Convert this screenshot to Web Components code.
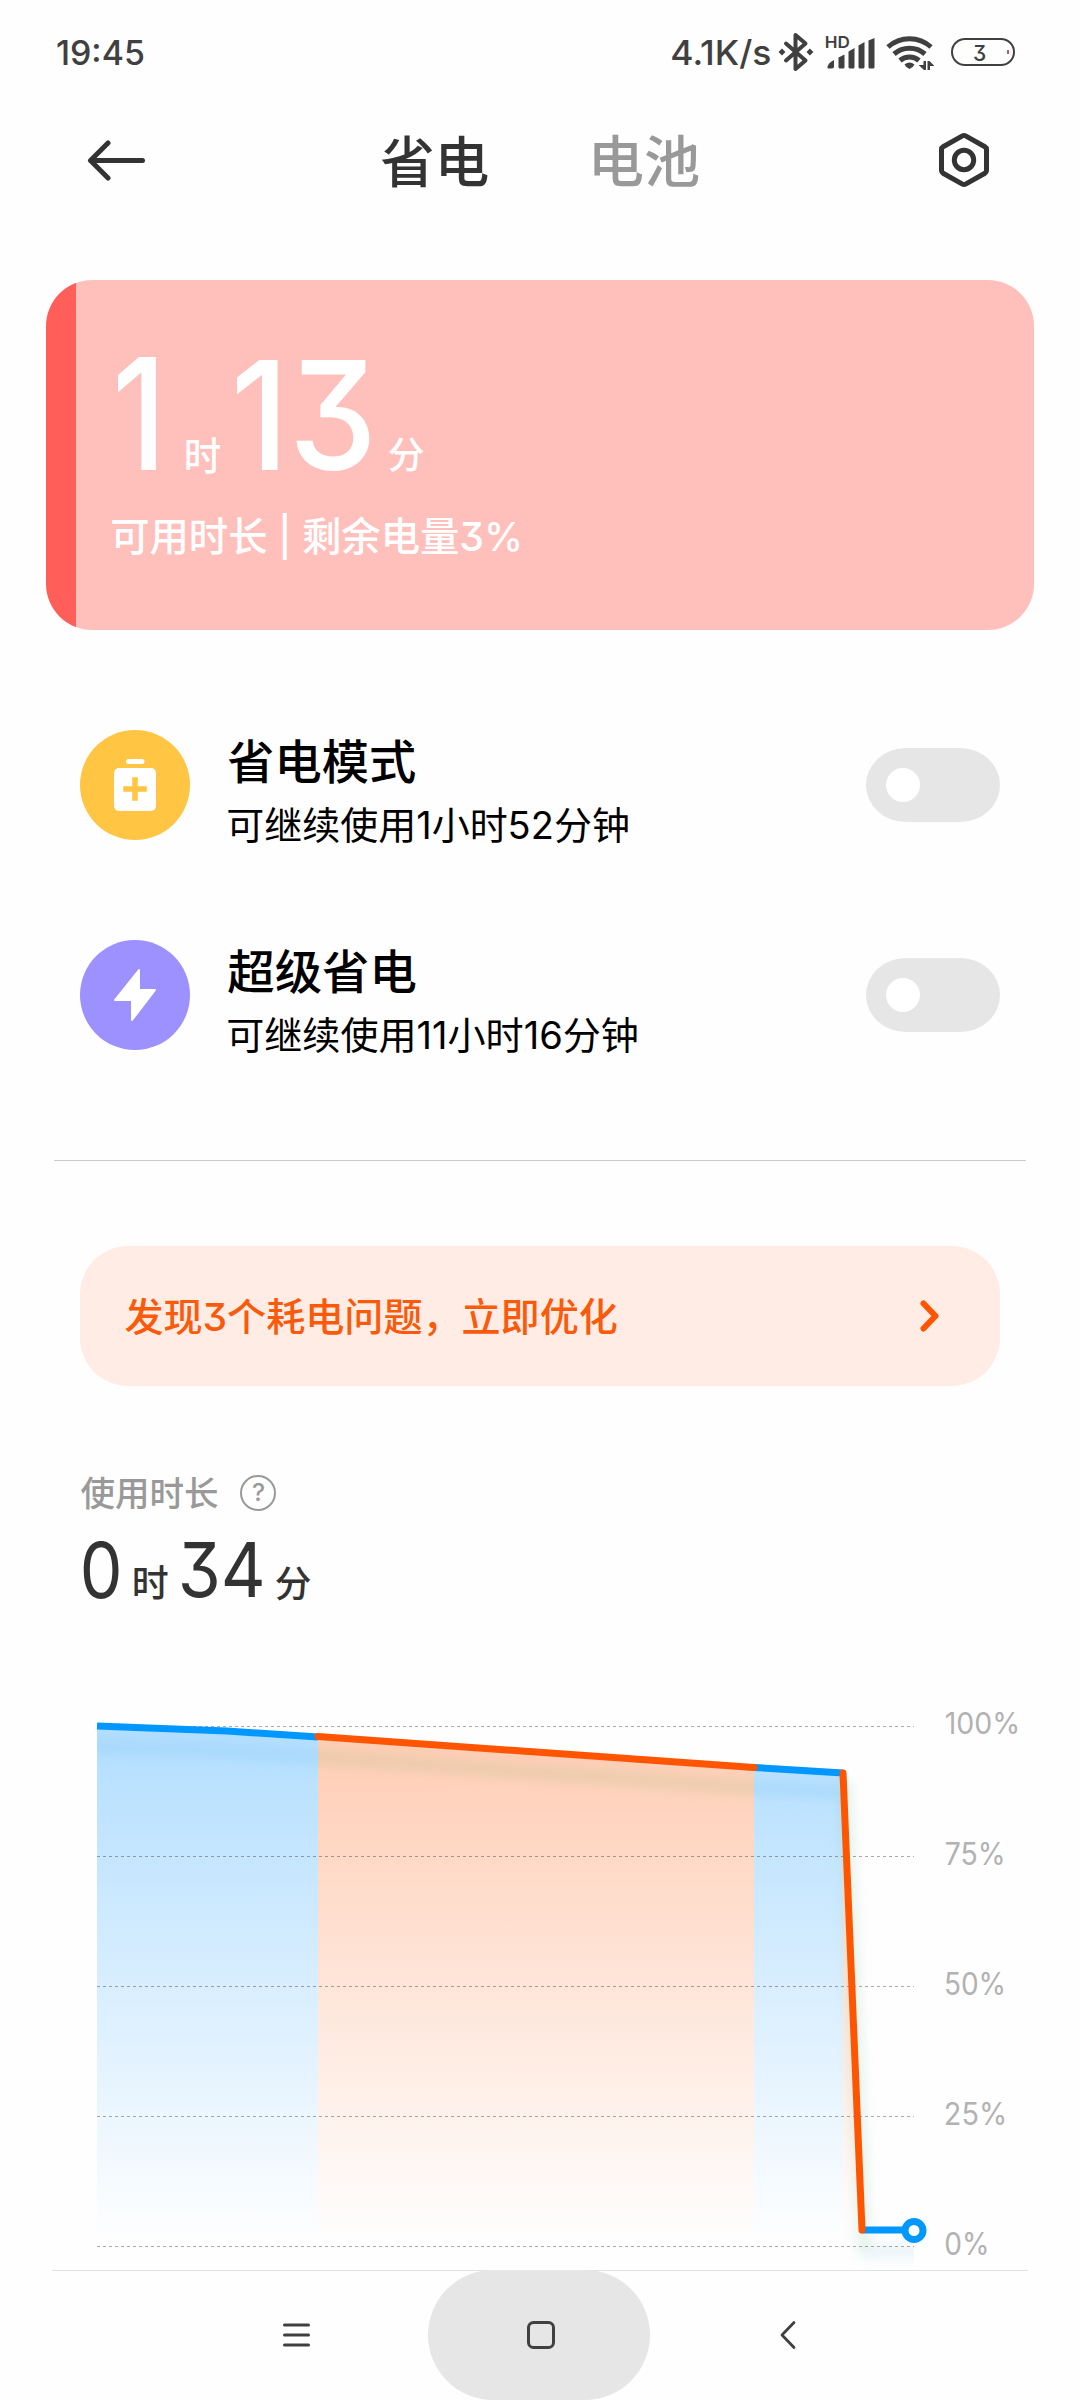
<!DOCTYPE html>
<html lang="zh-CN">
<head>
<meta charset="utf-8">
<title>省电</title>
<style>
html,body{margin:0;padding:0;background:#fefefe}
body{width:1080px;height:2400px;overflow:hidden;font-family:Inter,"Noto Sans CJK SC",sans-serif;color:#333}
</style>
</head>
<body>
<power-app></power-app>
<script>
const FAMILY = 'Inter,"Noto Sans CJK SC",sans-serif';
const pen = document.createElement('canvas').getContext('2d');

function define(name, html, setup) {
  const tpl = document.createElement('template');
  tpl.innerHTML = html;
  customElements.define(name, class extends HTMLElement {
    connectedCallback() {
      if (this.shadowRoot) return;
      this.attachShadow({mode: 'open'}).append(tpl.content.cloneNode(true));
      if (setup) setup.call(this, this.shadowRoot);
    }
  });
}

/* A text whose box is its ink: size = font size, w = ink width, h = ink height.
   level = the characters whose ink sets the height, when others overshoot it. */
define('ink-text', `<style>
  :host{display:block;flex:none;white-space:pre}
  span{display:block;width:max-content;transform-origin:0 0}
</style><span></span>`, function (root) {
  const span = root.querySelector('span');
  const text = this.getAttribute('text');
  const size = +this.getAttribute('size');
  const weight = this.getAttribute('weight') || 400;
  const w = +this.getAttribute('w');
  const h = +this.getAttribute('h');
  const zoom = 8;
  pen.font = `${weight} ${size * zoom}px ${FAMILY}`;
  const m = pen.measureText(text);
  const v = pen.measureText(this.getAttribute('level') || text);
  const left = m.actualBoundingBoxLeft / zoom;
  const ink = left + m.actualBoundingBoxRight / zoom;
  const ascent = v.actualBoundingBoxAscent / zoom;
  const inkH = ascent + v.actualBoundingBoxDescent / zoom;
  const kx = w / ink, ky = h / inkH;
  const base = size / 2 + (m.fontBoundingBoxAscent - m.fontBoundingBoxDescent) / zoom / 2;
  span.textContent = text;
  span.style.cssText = `font:${weight} ${size}px/${size}px ${FAMILY};font-feature-settings:"cv09";transform:translate(${left * kx}px,${(ascent - base) * ky}px) scale(${kx},${ky})`;
  this.style.width = w + 'px';
  this.style.height = h + 'px';
});

define('status-bar', `<style>
  :host{display:flex;height:104px;box-sizing:border-box;padding:32px 64px 0 57px;color:#404040;align-items:flex-start}
  .time{margin-top:8px}.rate{margin:8px 0 0 528.500px}
  svg{display:block;flex:none}
  .hd{display:flex;flex-direction:column;margin:4px 0 0 12px;width:50px}
  .bars{margin-top:-10px}
  .bat{display:flex;box-sizing:border-box;width:64px;height:28px;border:2px solid #404040;border-radius:14px;margin:6px 0 0 17px;padding:4.500px 4px 0 21px;justify-content:space-between}
  i{width:2px;height:4px;background:#d9534f;margin-top:5px}
</style>
<ink-text class="time" text="19:45" size="34" weight="500" w="86.5" h="25.5"></ink-text>
<ink-text class="rate" text="4.1K/s" level="4" size="34" weight="500" w="98" h="25"></ink-text>
<svg style="margin-left:7.500px" width="36" height="40" viewBox="0 0 36 40"><path d="M8 11.500L27.500 28.500L17.500 37V3L27.500 11.500L8 28.500" fill="none" stroke="#404040" stroke-width="4" stroke-linejoin="round" stroke-linecap="round"/><path d="M0.500 20l3.500-3.400 3.400 3.400-3.400 3.400zM28.500 20l3.400-3.400 3.500 3.400-3.500 3.400z" fill="#404040"/></svg>
<div class="hd"><ink-text text="HD" size="16" weight="600" w="23" h="12"></ink-text>
<svg class="bars" width="50" height="31" viewBox="0 0 50 31"><g fill="#404040"><path d="M1.500 30q0-5 6.500-8v6.500q0 2-2 2H2z"/><path d="M12.500 19.500l6-3v12.500q0 1.500-1.500 1.500h-3q-1.500 0-1.500-1.500z"/><path d="M22.500 13.500l6-3.500v19q0 1.500-1.500 1.500h-3q-1.500 0-1.500-1.500z"/><path d="M32.500 7.500l6-3.500v25q0 1.500-1.500 1.500h-3q-1.500 0-1.500-1.500z"/><path d="M42.500 2.500l6-2.500v29q0 1.500-1.500 1.500h-3q-1.500 0-1.500-1.500z"/></g></svg></div>
<svg style="margin:3px 0 0 10px" width="48" height="38" viewBox="0 0 48 38"><g fill="none" stroke="#404040" stroke-width="5"><path d="M2 12a32 32 0 0 1 43 0"/><path d="M8 19a23.500 23.500 0 0 1 31 0"/><path d="M14 25.500a14.500 14.500 0 0 1 19 0"/></g><path d="M18.500 29.500q5-4 10 0q-1 2.500-5 4.500q-4-2-5-4.500z" fill="#404040"/><path d="M37.500 26h2.500v9h-2l-5.500-5h5zM41.500 26h2l5 5h-4.500v4h-2.500z" fill="#404040"/></svg>
<div class="bat"><ink-text text="3" size="22" weight="500" w="11" h="16"></ink-text><i></i></div>`);

define('title-bar', `<style>
  :host{display:flex;height:176px;box-sizing:border-box;padding:28px 91px 0 88px;align-items:flex-start}
  svg{display:block;flex:none}
  .b{margin-left:106px;color:#999}
</style>
<svg style="margin:8px 0 0 -1px" width="58" height="41" viewBox="0 0 58 41"><path d="M55.500 20.500H4M21 3L3.500 20.500L21 38" fill="none" stroke="#333" stroke-width="5" stroke-linecap="round" stroke-linejoin="round"/></svg>
<ink-text style="margin:4px 0 0 236px" text="省电" size="54" weight="500" w="106.500" h="51.500"></ink-text>
<ink-text class="b" style="margin-top:4px" text="电池" size="54" weight="500" w="104.500" h="51"></ink-text>
<svg style="margin:0 0 0 auto" width="50" height="56" viewBox="0 0 50 56"><path d="M23.400 3.900Q25 3 26.600 3.900L45.900 14.800Q47.500 15.700 47.500 17.500V38.500Q47.500 40.300 45.900 41.200L26.600 52.100Q25 53 23.400 52.100L4.100 41.200Q2.500 40.300 2.500 38.500V17.500Q2.500 15.700 4.100 14.800Z" fill="none" stroke="#333" stroke-width="5"/><circle cx="25" cy="28" r="9.700" fill="none" stroke="#333" stroke-width="5"/></svg>`);

define('hero-card', `<style>
  :host{display:flex;flex-direction:column;height:350px;margin:0 46px;border-radius:46px;box-sizing:border-box;padding:77.500px 0 0 66px;color:#fff;background:linear-gradient(90deg,#ff5f58 0 30px,#ffc0bb 30px)}
  .t{display:flex;align-items:flex-start;height:159.500px;padding-left:5px}
</style>
<div class="t">
<ink-text style="margin:-1.500px 0 0 -1px" text="1" size="154" weight="450" w="41" h="114"></ink-text>
<ink-text style="margin:80px 0 0 28.500px" text="时" size="36" weight="500" w="34" h="35.500"></ink-text>
<ink-text style="margin:-1.500px 0 0 15px" text="13" size="154" weight="450" w="135" h="116"></ink-text>
<ink-text style="margin:80px 0 0 19.500px" text="分" size="36" weight="500" w="34.500" h="35"></ink-text>
</div>
<ink-text text="可用时长 | 剩余电量3%" level="可用时长剩余电量" size="38" weight="500" w="407" h="37.500"></ink-text>`);

define('mi-switch', `<style>
  :host{display:flex;align-items:center;flex:none;box-sizing:border-box;width:134px;height:74px;padding-left:20px;border-radius:40px/37px;background:#e6e6e6}
  i{width:34px;height:34px;border-radius:50%;background:#fff}
</style><i></i>`);

define('mode-row', `<style>
  :host{display:flex;height:110px;padding:0 80px;align-items:center}
  .ic{display:flex;align-items:center;justify-content:center;width:110px;height:110px;border-radius:50%;background:var(--disc);flex:none}
  .tx{display:flex;flex-direction:column;gap:24px;margin:11px auto 0 38px;color:#000}
</style>
<div class="ic"><slot></slot></div><div class="tx"></div><mi-switch></mi-switch>`, function (root) {
  root.querySelector('.tx').innerHTML =
    `<ink-text text="${this.getAttribute('name')}" size="47" weight="500" w="187.500" h="44"></ink-text>` +
    `<ink-text text="${this.getAttribute('note')}" size="37" w="${this.getAttribute('note-w')}" h="35.500"></ink-text>`;
});

define('tip-banner', `<style>
  :host{display:flex;align-items:center;justify-content:space-between;height:140px;margin:0 80px;box-sizing:border-box;padding:2px 60px 0 44.500px;border-radius:48px;background:#ffede5;color:#fa5a0a}
  svg{margin-top:-2px}
</style>
<ink-text text="发现3个耗电问题，立即优化" size="38" weight="500" w="491.500" h="37.500"></ink-text>
<svg width="21" height="32" viewBox="0 0 21 32"><path d="M4.500 3.500L16.500 16L4.500 28.500" fill="none" stroke="#ff5500" stroke-width="6" stroke-linecap="round" stroke-linejoin="round"/></svg>`);

define('usage-head', `<style>
  :host{display:flex;flex-direction:column;height:230px;padding-left:82px}
  .l{display:flex;color:#999;height:66px;gap:22px;margin-left:-1px}
  .q{display:flex;justify-content:center;box-sizing:border-box;width:36px;height:36px;border:2.500px solid #999;border-radius:50%;padding-top:6.500px}
  .v{display:flex;align-items:flex-start}
</style>
<div class="l"><ink-text style="margin-top:2px" text="使用时长" size="34" weight="500" w="137" h="33"></ink-text><div class="q"><ink-text text="?" size="24" weight="500" w="11" h="18"></ink-text></div></div>
<div class="v">
<ink-text style="margin-left:1px" text="0" size="78" weight="400" w="36" h="58.500"></ink-text>
<ink-text style="margin:25px 0 0 15px" text="时" size="35" weight="500" w="33.500" h="34.500"></ink-text>
<ink-text style="margin:0 0 0 13.500px" text="34" size="78" weight="400" w="81" h="58"></ink-text>
<ink-text style="margin:25px 0 0 14px" text="分" size="35" weight="500" w="34.500" h="34.500"></ink-text>
</div>`);

define('battery-chart', `<style>
  :host{display:flex;height:565px;color:#b2b2b2}
  svg{display:block;flex:none;margin-left:97px}
  .y{display:flex;flex-direction:column;gap:107px;padding-top:8px;margin-left:19px}
</style>
<svg width="830" height="565" viewBox="97 1705 830 565">
<defs>
<linearGradient id="b" gradientUnits="userSpaceOnUse" x1="0" y1="1726" x2="0" y2="2240"><stop offset="0" stop-color="#b2deff"/><stop offset="1" stop-color="#fefefe"/></linearGradient>
<linearGradient id="o" gradientUnits="userSpaceOnUse" x1="0" y1="1726" x2="0" y2="2240"><stop offset="0" stop-color="#ffccb3"/><stop offset="1" stop-color="#fefefe"/></linearGradient>
<filter id="s" filterUnits="userSpaceOnUse" x="60" y="1680" width="900" height="620"><feGaussianBlur stdDeviation="6"/></filter>
<clipPath id="c"><path d="M97 1705H914V2270H97Z"/></clipPath>
<clipPath id="c1"><path d="M97 1705H318V2270H97ZM754 1705H914V2270H754Z"/></clipPath>
<clipPath id="c2"><path d="M318 1705H754V2270H318Z"/></clipPath>
</defs>
<path d="M97 1726L227 1731L318 1737V2246H97Z" fill="url(#b)"/>
<path d="M318 1737L754 1768V2246H318Z" fill="url(#o)"/>
<path d="M754 1768L843 1773V2246H754Z" fill="url(#b)"/>
<path d="M843 1773L862 2230V2246H843Z" fill="url(#o)"/>
<g fill="none" stroke-width="14">
<g clip-path="url(#c1)"><path d="M90 1746L227 1751L318 1757L754 1788L843 1792" stroke="#6cc0ec" stroke-opacity=".2" filter="url(#s)"/></g>
<g clip-path="url(#c2)"><path d="M227 1751L318 1757L754 1788L843 1792" stroke="#b8bd84" stroke-opacity=".28" filter="url(#s)"/></g>
<g clip-path="url(#c)"><path d="M845 1782L864 2250" stroke="#8cc79a" stroke-opacity=".2" filter="url(#s)"/><path d="M862 2251H930" stroke="#8cc8e0" stroke-opacity=".16" filter="url(#s)"/></g>
</g>
<path d="M97 1726.500H914M97 1856.500H914M97 1986.500H914M97 2116.500H914M97 2246.500H914" stroke="#000" stroke-opacity=".33" stroke-width="1" stroke-dasharray="3 3"/>
<g fill="none" stroke-width="7" stroke-linejoin="round">
<path d="M97 1726L227 1731L318 1737M754 1767.500L843 1773M862 2230H914" stroke="#0097ff"/>
<path d="M318 1736.500L754 1767.500M843 1773L862 2230" stroke="#ff5500" stroke-linecap="round"/>
</g>
<circle cx="914" cy="2230.500" r="9" fill="#fff" stroke="#0097ff" stroke-width="7"/>
</svg>
<div class="y">
<ink-text text="100%" size="32" w="71" h="22.500"></ink-text>
<ink-text text="75%" size="32" w="56.500" h="23"></ink-text>
<ink-text text="50%" size="32" w="57" h="23"></ink-text>
<ink-text text="25%" size="32" w="58" h="23"></ink-text>
<ink-text text="0%" size="32" w="40.500" h="23"></ink-text>
</div>`);

define('nav-bar', `<style>
  :host{display:flex;height:130px;align-items:center}
  svg{display:block;flex:none}
  .home{display:flex;align-items:center;justify-content:center;width:222px;height:130px;border-radius:65px;background:#e6e6e6;margin-left:117px}
</style>
<svg style="margin-left:282px" width="29" height="26" viewBox="0 0 29 26"><path d="M2.500 3H26.500M2.500 13H26.500M2.500 23H26.500" stroke="#404040" stroke-width="3" stroke-linecap="round"/></svg>
<div class="home"><svg style="margin-left:4px" width="30" height="30" viewBox="0 0 30 30"><rect x="2.500" y="2.500" width="25" height="25" rx="5" fill="none" stroke="#404040" stroke-width="3"/></svg></div>
<svg style="margin-left:128.500px" width="18" height="30" viewBox="0 0 18 30"><path d="M15 2.500L3 15L15 27.500" fill="none" stroke="#404040" stroke-width="2.800" stroke-linecap="round" stroke-linejoin="round"/></svg>`);

define('power-app', `<style>
  :host{display:flex;flex-direction:column;width:1080px;height:2400px;background:#fefefe}
  hr{border:0;height:1px;flex:none;background:#ccc;margin:110px 54px 85px}
  .line{height:1px;flex:none;background:#e2e2e2;margin:0 52px -1px}
  status-bar,title-bar,hero-card,mode-row,tip-banner,usage-head,battery-chart,nav-bar{flex:none}
</style>
<status-bar></status-bar>
<title-bar></title-bar>
<hero-card></hero-card>
<mode-row style="margin-top:100px;--disc:#ffc543" name="省电模式" note="可继续使用1小时52分钟" note-w="399.500"><svg width="42" height="52" viewBox="0 0 42 52"><rect x="12" y="0" width="18.500" height="5" rx="2.500" fill="#fff"/><rect x="0" y="9" width="42" height="43" rx="5" fill="#fff"/><path d="M21 21v18M12 30h18" stroke="#ffc543" stroke-width="5.500" stroke-linecap="square"/></svg></mode-row>
<mode-row style="margin-top:100px;--disc:#9c91ff" name="超级省电" note="可继续使用11小时16分钟" note-w="408.500"><svg width="42" height="52" viewBox="0 0 42 52"><path d="M25 1V21H41L18 51V31H1Z" fill="#fff" stroke="#fff" stroke-width="2" stroke-linejoin="round"/></svg></mode-row>
<hr>
<tip-banner></tip-banner>
<usage-head style="margin-top:89px"></usage-head>
<battery-chart></battery-chart>
<div class="line"></div>
<nav-bar></nav-bar>`);
</script>
</body>
</html>
